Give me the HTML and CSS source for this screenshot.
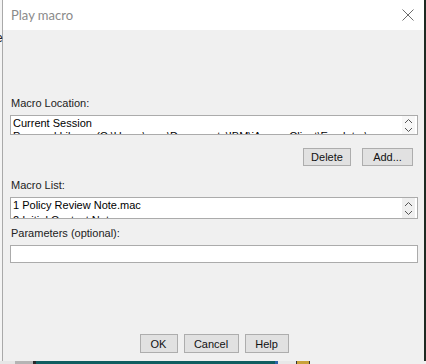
FILE: index.html
```html
<!DOCTYPE html>
<html lang="en">
<head>
  <meta charset="UTF-8">
  <title>Play macro</title>
  <link rel="stylesheet" href="styles.css">
</head>
<body>
  <div class="screen">
    <div class="behind-text">e</div>
    <div class="dialog">
      <div class="titlebar">
        <span class="title">Play macro</span>
        <svg class="close" width="12" height="12" viewBox="0 0 12 12">
          <path d="M0.5 0.5 L11.5 11.5 M11.5 0.5 L0.5 11.5" stroke="#6b6b6b" stroke-width="1" fill="none"/>
        </svg>
      </div>

      <div class="content">
        <div class="label">Macro Location:</div>
        <div class="listbox loc">
          <div class="lines">
            <div class="line">Current Session</div>
            <div class="line">Personal Library (C:\Users\user\Documents\IBM\iAccessClient\Emulator\macros)</div>
          </div>
          <div class="spin">
            <svg width="9" height="6" viewBox="0 0 9 6"><path d="M1 5 L4.5 1.5 L8 5" stroke="#555" fill="none"/></svg>
            <svg width="9" height="6" viewBox="0 0 9 6"><path d="M1 1 L4.5 4.5 L8 1" stroke="#555" fill="none"/></svg>
          </div>
        </div>

        <div class="row-right">
          <button class="btn delete">Delete</button>
          <button class="btn add">Add...</button>
        </div>

        <div class="label">Macro List:</div>
        <div class="listbox list">
          <div class="lines">
            <div class="line">1 Policy Review Note.mac</div>
            <div class="line">2 Initial Contact Note.mac</div>
          </div>
          <div class="spin">
            <svg width="9" height="6" viewBox="0 0 9 6"><path d="M1 5 L4.5 1.5 L8 5" stroke="#555" fill="none"/></svg>
            <svg width="9" height="6" viewBox="0 0 9 6"><path d="M1 1 L4.5 4.5 L8 1" stroke="#555" fill="none"/></svg>
          </div>
        </div>

        <div class="label">Parameters (optional):</div>
        <div class="textfield"></div>

        <div class="footer">
          <button class="btn ok">OK</button>
          <button class="btn cancel">Cancel</button>
          <button class="btn help">Help</button>
        </div>
      </div>
    </div>

    <div class="taskbar">
      <div class="tb-a"></div>
      <div class="tb-b"></div>
      <div class="tb-c"></div>
      <div class="tb-teal"></div>
      <div class="tb-blue"></div>
      <div class="tb-d"></div>
      <div class="tb-icon"></div>
      <div class="tb-e"></div>
    </div>
  </div>
</body>
</html>
```

FILE: styles.css
```css
* {
  box-sizing: border-box;
}

body {
  margin: 0;
  padding: 0;
  background: #f0f0f0;
  font-family: "Liberation Sans", Arial, sans-serif;
  color: #000;
}

.screen {
  width: 426px;
  height: 364px;
  position: relative;
  overflow: hidden;
  background: linear-gradient(to right, #f4f4f4 0, #f4f4f4 424px, #1e2a22 424px);
}

.behind-text {
  position: absolute;
  left: -4px;
  top: 31px;
  font-size: 12px;
  line-height: 14px;
  color: #222;
}

.dialog {
  margin-left: 2px;
  width: 422px;
  height: 361px;
  background: #f0f0f0;
  border-left: 1px solid #a9a9a9;
  display: flex;
  flex-direction: column;
}

.titlebar {
  height: 30px;
  background: #fff;
  display: flex;
  align-items: center;
  justify-content: space-between;
  padding: 0 10px 0 8px;
  flex-shrink: 0;
}

.title {
  font-family: Lato, "Noto Sans", sans-serif;
  font-size: 13px;
  color: #8a8a8a;
  margin-top: -1px;
}

.close {
  display: block;
  margin-top: -1px;
}

.content {
  flex: 1;
  display: flex;
  flex-direction: column;
  padding: 67px 6px 8px 7px;
  font-size: 11px;
}

.label {
  height: 13px;
  line-height: 13px;
  color: #222;
  padding-left: 1px;
  margin-bottom: 5px;
}

.listbox {
  display: flex;
  background: #fff;
  border: 1px solid #ababab;
  overflow: hidden;
}

.listbox.loc {
  height: 20px;
}

.listbox.list {
  height: 22px;
  margin-bottom: 8px;
}

.lines {
  flex: 1;
  padding: 1px 2px 0;
  overflow: hidden;
  white-space: nowrap;
}

.line {
  height: 13px;
  line-height: 13px;
}

.list .lines {
  padding-top: 0;
}

.list .line {
  height: 15px;
  line-height: 15px;
}

.spin {
  width: 13px;
  margin-right: 2px;
  background: #f7f7f7;
  display: flex;
  flex-direction: column;
  align-items: center;
  justify-content: center;
  gap: 3px;
}

.list .spin {
  background: #efefef;
}

.spin svg {
  display: block;
}

.row-right {
  display: flex;
  justify-content: flex-end;
  gap: 11px;
  margin: 13px 5px 13px 0;
}

.btn {
  height: 18px;
  padding: 0;
  background: #e1e1e1;
  border: 1px solid #adadad;
  font-family: "Liberation Sans", Arial, sans-serif;
  font-size: 11px;
  color: #111;
  line-height: 16px;
}

.delete {
  width: 48px;
}

.add {
  width: 51px;
}

.textfield {
  height: 18px;
  background: #fff;
  border: 1px solid #ababab;
}

.footer {
  margin-top: auto;
  display: flex;
  justify-content: center;
  gap: 6px;
}

.footer .btn {
  height: 19px;
}

.ok {
  width: 38px;
}

.cancel {
  width: 55px;
}

.help {
  width: 44px;
}

.taskbar {
  display: flex;
  height: 3px;
}

.tb-a { width: 15px; background: #e6e6e6; }
.tb-b { width: 18px; background: #b4b4b4; }
.tb-c { width: 3px; background: #2a2a2a; }
.tb-teal { width: 239px; background: #0f5d60; }
.tb-blue { width: 3px; background: #2a62a8; }
.tb-d { width: 18px; background: #e8e8e8; }
.tb-icon { width: 14px; background: #c9a23a; border-left: 1px solid #333; border-right: 1px solid #333; }
.tb-e { flex: 1; background: #f0f0f0; }
```
